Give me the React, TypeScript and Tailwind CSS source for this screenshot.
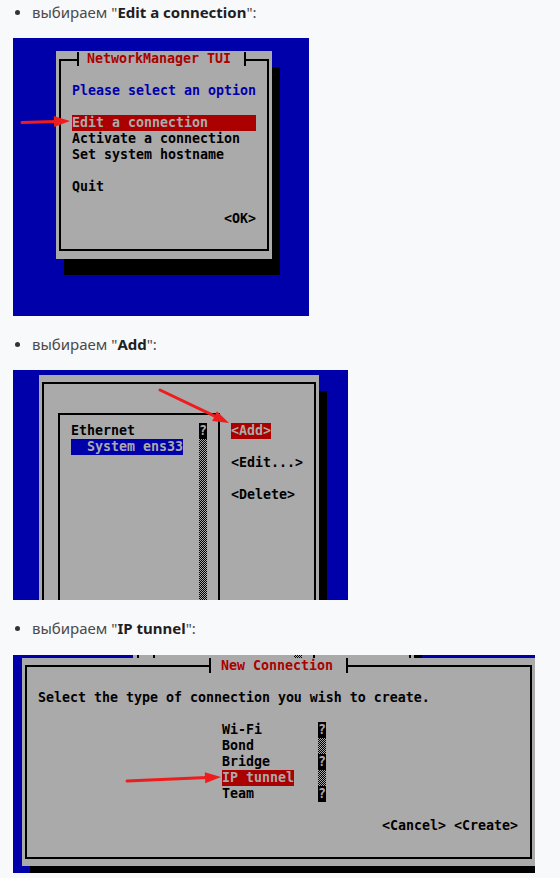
import React from "react";

const mono = "font-['DejaVu_Sans_Mono',monospace] text-[13.29px] leading-[16px] font-bold whitespace-pre";

function Arrow({ x1, y1, x2, y2 }: { x1: number; y1: number; x2: number; y2: number }) {
  const a = Math.atan2(y2 - y1, x2 - x1);
  const len = 16;
  const hw = 5.5;
  const bx = x2 - len * Math.cos(a);
  const by = y2 - len * Math.sin(a);
  const px = -Math.sin(a) * hw;
  const py = Math.cos(a) * hw;
  const lx = x2 - (len - 2) * Math.cos(a);
  const ly = y2 - (len - 2) * Math.sin(a);
  return (
    <g>
      <line x1={x1} y1={y1} x2={lx} y2={ly} stroke="#ee1c1c" strokeWidth={3} strokeLinecap="round" />
      <polygon points={`${x2},${y2} ${bx + px},${by + py} ${bx - px},${by - py}`} fill="#ee1c1c" />
    </g>
  );
}

function Bullet({ bold }: { bold: string }) {
  return (
    <div className="flex items-center h-[20px]">
      <span className="ml-[15px] w-[5px] h-[5px] rounded-full bg-[#333333] shrink-0" />
      <span className="ml-[12px] text-[15px] leading-[20px] text-[#4a4a4a] font-['Noto_Sans',sans-serif]">
        выбираем "<b className="font-bold text-[#1f1f1f]">{bold}</b>":
      </span>
    </div>
  );
}

function QCell() {
  return <div className="h-[16px] w-[8px] bg-black text-[#aaaaaa] leading-[16px] text-center">?</div>;
}

function Checker({ className }: { className: string }) {
  return (
    <div
      className={
        "bg-[repeating-conic-gradient(#000000_0%_25%,#aaaaaa_0%_50%)] bg-[length:2px_2px] " + className
      }
    />
  );
}

export default function App() {
  return (
    <div className="w-[560px] h-[878px] overflow-hidden bg-[#f8f9fb] pt-[2px]">
      <Bullet bold="Edit a connection" />

      {/* Screenshot 1 */}
      <div className="relative ml-[13px] mt-[16px] w-[296px] h-[278px] bg-[#0000aa] overflow-hidden">
        <div className="ml-[43px] mt-[13px] w-[216px] h-[208px] bg-[#aaaaaa] shadow-[8px_16px_0_0_#000000] px-[3px] py-[8px]">
          <div className={"h-full border-2 border-black text-black " + mono}>
            <div className="-mt-[9px] ml-[16px] flex h-[14px]">
              <div className="w-[2px] bg-black" />
              <div className="bg-[#aaaaaa] pl-[8px] pr-[13px] flex items-center text-[#aa0000]">NetworkManager TUI</div>
              <div className="w-[2px] bg-black" />
            </div>
            <div className="mt-[17px] pl-[11px]">
              <div className="text-[#0000aa]">Please select an option</div>
              <div className="h-[16px]" />
              <div className="w-[184px] bg-[#aa0000] text-[#aaaaaa]">Edit a connection</div>
              <div>Activate a connection</div>
              <div>Set system hostname</div>
              <div className="h-[16px]" />
              <div>Quit</div>
              <div className="h-[16px]" />
              <div className="w-[184px] text-right">&lt;OK&gt;</div>
            </div>
          </div>
        </div>
        <svg className="absolute inset-0" width="296" height="278">
          <Arrow x1={9} y1={84.5} x2={57} y2={83} />
        </svg>
      </div>

      <div className="mt-[18px]">
        <Bullet bold="Add" />
      </div>

      {/* Screenshot 2 */}
      <div className="relative ml-[13px] mt-[16px] w-[335px] h-[230px] bg-[#0000aa] overflow-hidden">
        <div className="ml-[26px] mt-[5px] w-[280px] h-[260px] bg-[#aaaaaa] shadow-[8px_16px_0_0_#000000] px-[3px] pt-[7px]">
          <div className={"h-[300px] border-2 border-black text-black pl-[14px] pt-[29px] flex " + mono}>
            <div className="w-[162px] h-[300px] border-2 border-black flex pt-[8px] pl-[11px]">
              <div className="w-[128px]">
                <div>Ethernet</div>
                <div className="w-[112px] bg-[#0000aa] text-[#aaaaaa]">  System ens33</div>
              </div>
              <div className="w-[8px] flex flex-col">
                <QCell />
                <Checker className="h-[200px] w-[8px]" />
              </div>
            </div>
            <div className="ml-[11px] pt-[10px]">
              <div className="w-[40px] bg-[#aa0000] text-[#aaaaaa]">&lt;Add&gt;</div>
              <div className="h-[16px]" />
              <div>&lt;Edit...&gt;</div>
              <div className="h-[16px]" />
              <div>&lt;Delete&gt;</div>
            </div>
          </div>
        </div>
        <svg className="absolute inset-0" width="335" height="230">
          <Arrow x1={147} y1={20} x2={216} y2={53} />
        </svg>
      </div>

      <div className="mt-[18px]">
        <Bullet bold="IP tunnel" />
      </div>

      {/* Screenshot 3 */}
      <div className="relative ml-[13px] mt-[17px] w-[522px] h-[218px] bg-[#0000aa] overflow-hidden">
        <div className="flex h-[3px]">
          <div className="w-[120px] bg-[#0000aa]" />
          <div className="flex w-[281px] bg-[#aaaaaa]">
            <div className="w-[4px]" />
            <div className="w-[2px] bg-black" />
            <div className="w-[14px]" />
            <div className="w-[2px] bg-black" />
            <div className="w-[139px]" />
            <Checker className="w-[8px] h-[3px]" />
            <div className="w-[11px]" />
            <div className="w-[2px] bg-black" />
            <div className="w-[94px]" />
            <div className="w-[2px] bg-black" />
            <div className="w-[3px]" />
          </div>
          <div className="w-[8px] bg-black" />
        </div>
        <div className="ml-[9px] w-[513px] h-[208px] bg-[#aaaaaa] shadow-[8px_7px_0_0_#000000] px-[3px] py-[7px]">
          <div className={"h-full border-2 border-black text-black " + mono}>
            <div className="-mt-[9px] ml-[182px] flex h-[15px]">
              <div className="w-[2px] bg-black" />
              <div className="bg-[#aaaaaa] pl-[10px] pr-[13px] flex items-center text-[#aa0000]">New Connection</div>
              <div className="w-[2px] bg-black" />
            </div>
            <div className="mt-[17px] pl-[11px]">
              <div>Select the type of connection you wish to create.</div>
              <div className="h-[16px]" />
              <div className="ml-[184px] flex">
                <div className="w-[96px]">
                  <div>Wi-Fi</div>
                  <div>Bond</div>
                  <div>Bridge</div>
                  <div className="w-[72px] bg-[#aa0000] text-[#aaaaaa]">IP tunnel</div>
                  <div>Team</div>
                </div>
                <div className="w-[8px] flex flex-col">
                  <QCell />
                  <Checker className="h-[16px] w-[8px]" />
                  <QCell />
                  <Checker className="h-[16px] w-[8px]" />
                  <QCell />
                </div>
              </div>
              <div className="h-[16px]" />
              <div className="text-right pr-[12px]">&lt;Cancel&gt; &lt;Create&gt;</div>
            </div>
          </div>
        </div>
        <svg className="absolute inset-0" width="522" height="218">
          <Arrow x1={114} y1={126} x2={208} y2={122} />
        </svg>
      </div>
    </div>
  );
}
